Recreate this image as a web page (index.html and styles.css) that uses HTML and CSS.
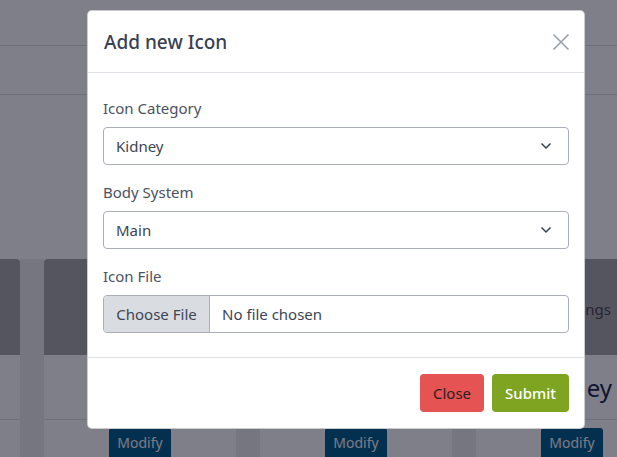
FILE: index.html
```html
<!DOCTYPE html>
<html>
<head>
<meta charset="utf-8">
<link rel="stylesheet" href="styles.css">
</head>
<body>
<div class="page">
  <div class="topbar"></div>
  <div class="subbar"></div>
  <div class="spacer"></div>
  <div class="cards">
    <div class="card"><div class="card-head"></div><div class="card-body"></div><div class="card-foot"></div></div>
    <div class="card"><div class="card-head">Findings</div><div class="card-body">Heart</div><div class="card-foot"><span class="modify">Modify</span></div></div>
    <div class="card"><div class="card-head">Findings</div><div class="card-body">Lungs</div><div class="card-foot"><span class="modify">Modify</span></div></div>
    <div class="card"><div class="card-head">Findings</div><div class="card-body">Kidney</div><div class="card-foot"><span class="modify">Modify</span></div></div>
  </div>
</div>
<div class="backdrop"></div>
<div class="modal">
  <div class="modal-header">
    <h5 class="modal-title">Add new Icon</h5>
    <svg class="close-x" width="18" height="18" viewBox="0 0 18 18"><path d="M1.5 1.5 L16.5 16.5 M16.5 1.5 L1.5 16.5" stroke="#9aa0a9" stroke-width="1.6" fill="none"/></svg>
  </div>
  <div class="modal-body">
    <div class="field">
      <label class="label">Icon Category</label>
      <div class="select"><span>Kidney</span><svg width="12" height="8" viewBox="0 0 12 8"><path d="M1.5 1.5 L6 6 L10.5 1.5" stroke="#374151" stroke-width="1.5" fill="none"/></svg></div>
    </div>
    <div class="field">
      <label class="label">Body System</label>
      <div class="select"><span>Main</span><svg width="12" height="8" viewBox="0 0 12 8"><path d="M1.5 1.5 L6 6 L10.5 1.5" stroke="#374151" stroke-width="1.5" fill="none"/></svg></div>
    </div>
    <div class="field">
      <label class="label">Icon File</label>
      <div class="file"><span class="file-btn">Choose File</span><span class="file-name">No file chosen</span></div>
    </div>
  </div>
  <div class="modal-footer">
    <button class="btn btn-close">Close</button>
    <button class="btn btn-submit">Submit</button>
  </div>
</div>
</body>
</html>
```
FILE: styles.css
```css
* { box-sizing: border-box; }
html, body { margin: 0; padding: 0; }
body {
  width: 617px;
  height: 457px;
  overflow: hidden;
  background: #ffffff;
  font-family: "Noto Sans", "Open Sans", sans-serif;
  position: relative;
}
.page { display: flex; flex-direction: column; }
.topbar { height: 46px; border-bottom: 1px solid #dcdcdd; }
.subbar { height: 49px; border-bottom: 1px solid #dcdcdd; }
.spacer { height: 164px; }
.cards {
  display: flex;
  gap: 24px;
  margin-left: -172px;
  background: #ececee;
}
.card {
  width: 192px;
  flex: none;
  display: flex;
  flex-direction: column;
  background: #ffffff;
}
.card-head {
  height: 96px;
  background: #aaaaac;
  border-radius: 4px 4px 0 0;
  display: flex;
  align-items: center;
  justify-content: center;
  color: #4a4a52;
  font-size: 15px;
  padding-left: 18px;
  padding-top: 4px;
}
.card-body {
  height: 65px;
  border-bottom: 1px solid #dcdcdd;
  display: flex;
  align-items: center;
  justify-content: center;
  font-size: 24px;
  color: #1e2b50;
  padding-left: 4px;
}
.card-foot { display: flex; justify-content: center; padding-top: 8px; height: 40px; }
.modify {
  background: #08608b;
  color: #f4f6f8;
  font-size: 14px;
  padding: 5px 8px;
  border-radius: 3px;
  height: 40px;
}
.backdrop {
  position: absolute;
  inset: 0;
  background: rgba(0, 0, 19, 0.5);
}
.modal {
  position: absolute;
  left: 87px;
  top: 10px;
  width: 498px;
  height: 419px;
  background: #fff;
  border: 1px solid rgba(0,0,0,0.2);
  border-radius: 5px;
  display: flex;
  flex-direction: column;
}
.modal-header {
  height: 62px;
  border-bottom: 1px solid #dee2e6;
  display: flex;
  align-items: center;
  justify-content: space-between;
  padding: 0 14px 0 16px;
}
.modal-title {
  margin: 0;
  font-size: 19px;
  font-weight: 500;
  color: #384152;
}
.close-x { display: block; }
.modal-body {
  padding: 24px 15px 0 15px;
  height: 285px;
  border-bottom: 1px solid #dee2e6;
  display: flex;
  flex-direction: column;
  gap: 16px;
}
.field { display: flex; flex-direction: column; gap: 8px; }
.label { font-size: 15px; color: #4b5261; line-height: 22px; }
.select {
  height: 38px;
  border: 1px solid #a9aeb8;
  border-radius: 4px;
  display: flex;
  align-items: center;
  justify-content: space-between;
  padding: 0 16px 0 12px;
  font-size: 15px;
  color: #3d4554;
}
.file {
  height: 38px;
  border: 1px solid #a9aeb8;
  border-radius: 4px;
  display: flex;
  overflow: hidden;
  font-size: 15px;
  color: #3d4554;
}
.file-btn {
  width: 106px;
  background: #d9dce1;
  border-right: 1px solid #a9aeb8;
  display: flex;
  align-items: center;
  justify-content: center;
}
.file-name { display: flex; align-items: center; padding-left: 12px; }
.modal-footer {
  flex: 1;
  display: flex;
  justify-content: flex-end;
  align-items: flex-start;
  gap: 8px;
  padding: 16px 15px 0 0;
}
.btn {
  height: 38px;
  border: none;
  border-radius: 4px;
  font-family: inherit;
  font-size: 15px;
  padding: 0 12px;
}
.btn-close { background: #e55353; color: #2e1e24; width: 64px; }
.btn-submit { background: #7ea421; color: #ffffff; width: 77px; font-weight: 500; }
```
